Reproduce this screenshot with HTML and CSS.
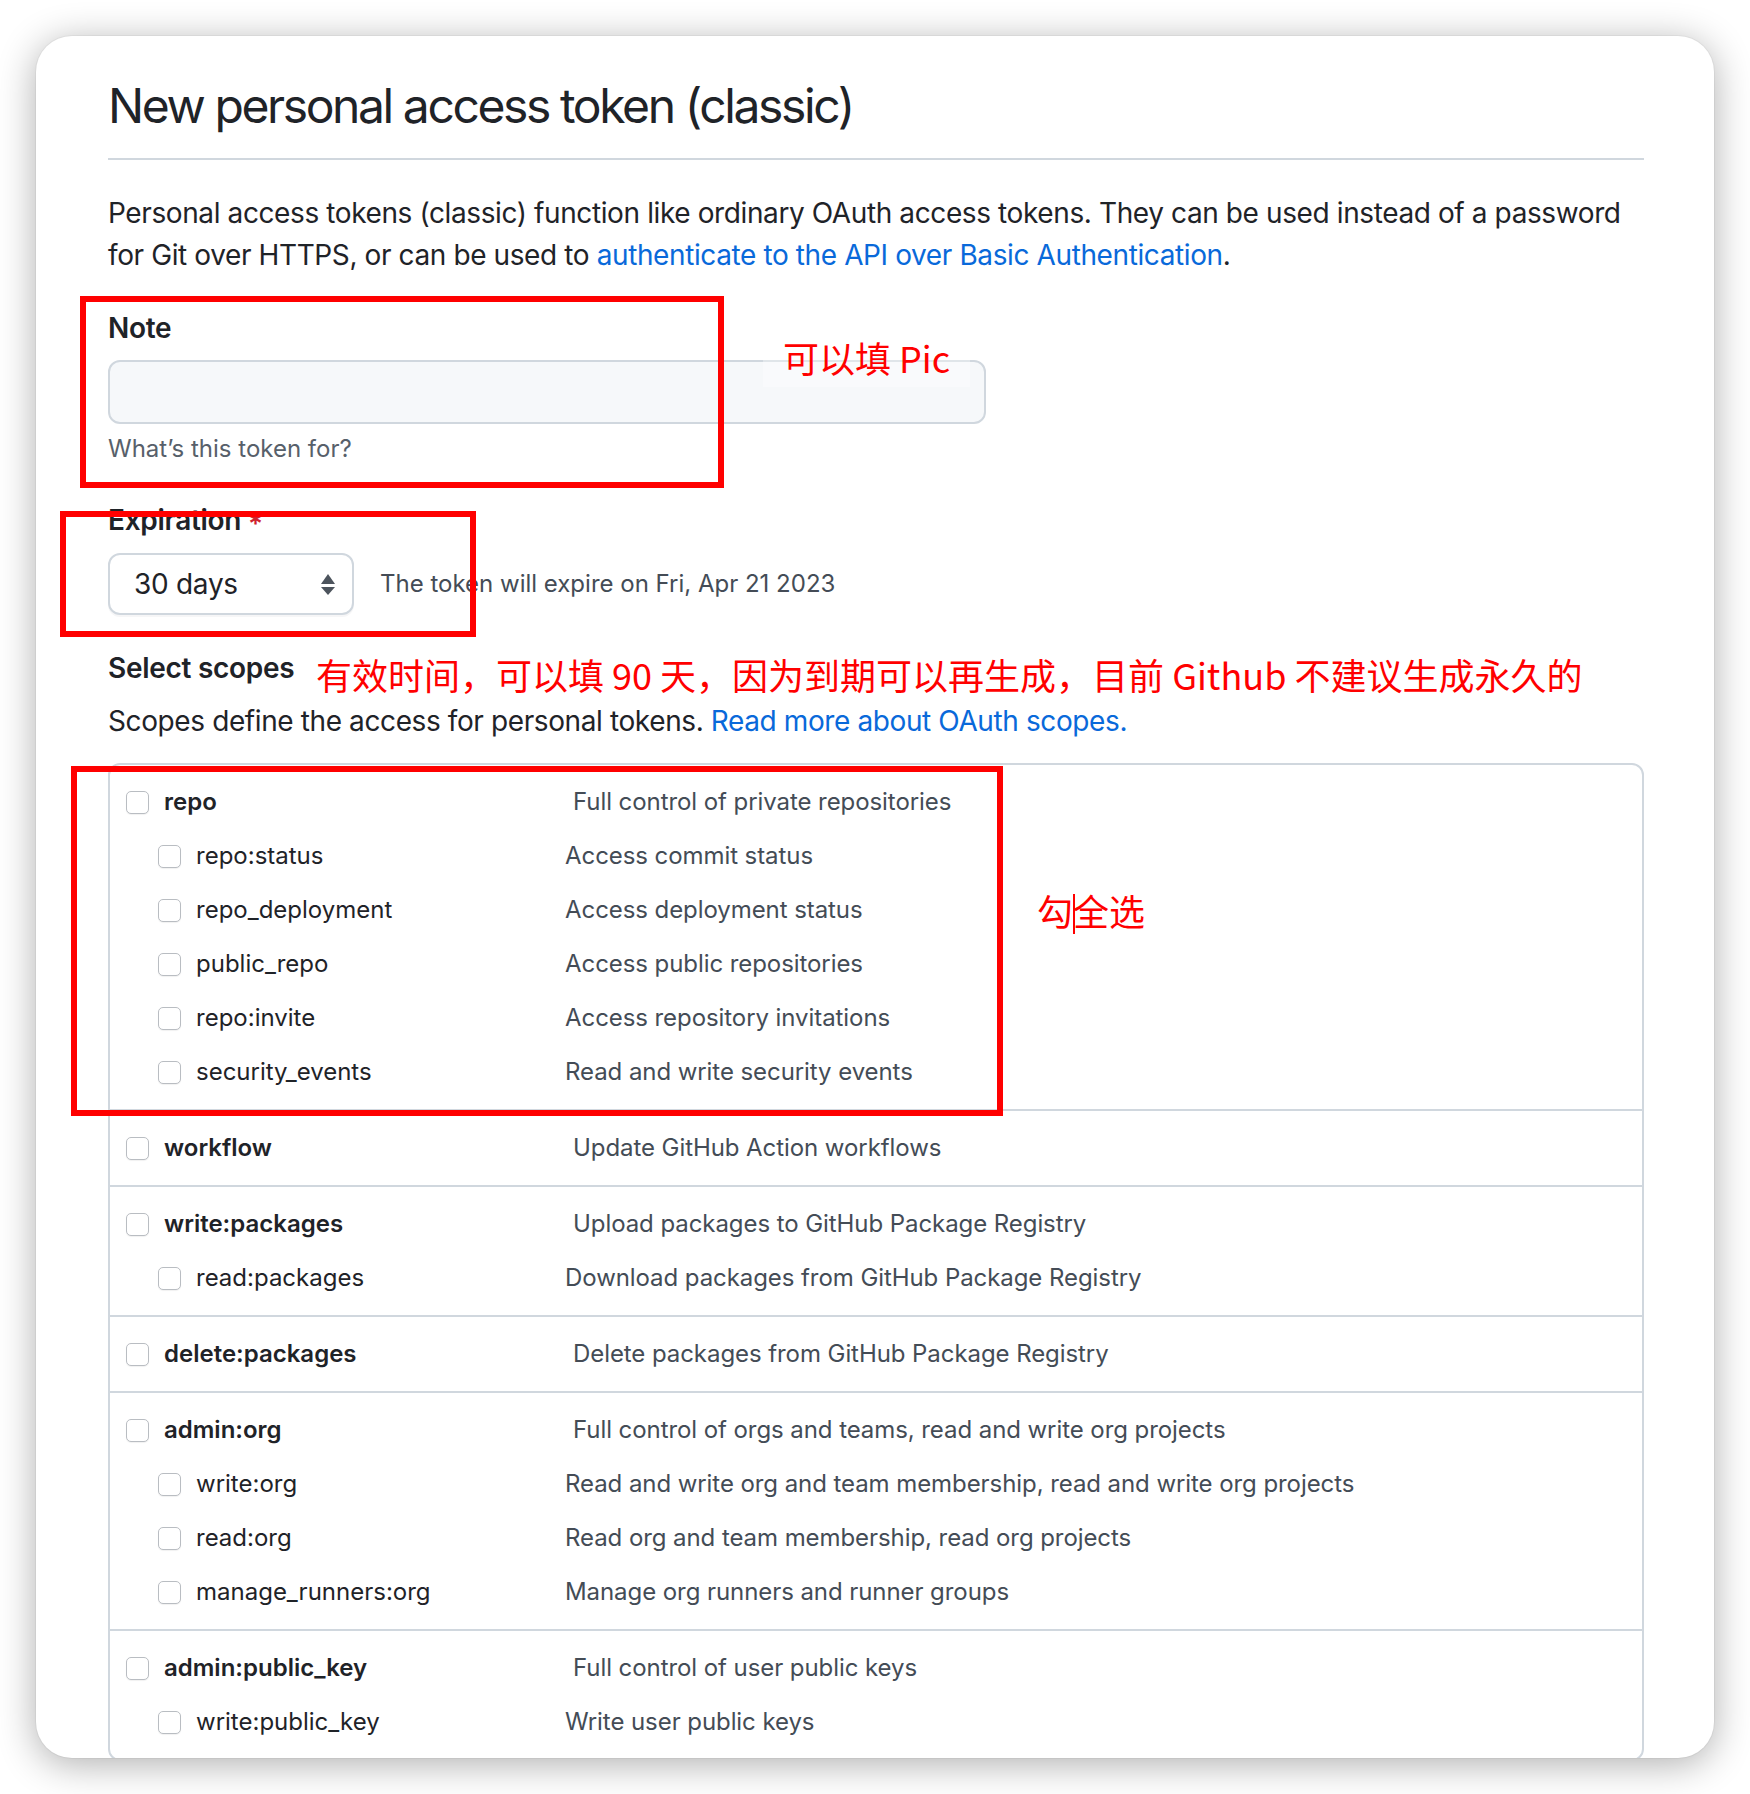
FILE: index.html
```html
<!DOCTYPE html>
<html lang="en">
<head>
<meta charset="utf-8">
<title>New personal access token (classic)</title>
<link rel="stylesheet" href="styles.css">
</head>
<body>
<div class="window">
  <main class="content">
    <h1 class="subhead">New personal access token (classic)</h1>
    <p class="intro">Personal access tokens (classic) function like ordinary OAuth access tokens. They can be used instead of a password for Git over HTTPS, or can be used to <a class="link" href="#">authenticate to the API over Basic Authentication</a>.</p>

    <div class="form-group">
      <label class="label note-label" for="note">Note</label>
      <input class="input" id="note" type="text">
      <p class="hint">What’s this token for?</p>
    </div>

    <div class="form-group">
      <label class="label exp-label">Expiration <span class="req">*</span></label>
      <div class="exp-row">
        <div class="select">
          <span>30 days</span>
          <svg class="select-arrow" width="14" height="21" viewBox="0 0 14 21"><polygon points="0,10 7,0 14,10"/><polygon points="0,13 7,21 14,13"/></svg>
        </div>
        <span class="exp-hint">The token will expire on Fri, Apr 21 2023</span>
      </div>
    </div>

    <div class="scopes-head">
      <div class="label">Select scopes</div>
      <p class="scopes-note">Scopes define the access for personal tokens. <a class="link" href="#">Read more about OAuth scopes.</a></p>
    </div>

    <div class="scopes">
      <div class="group">
        <div class="row main"><input class="check" type="checkbox"><span class="name">repo</span><span class="desc">Full control of private repositories</span></div>
        <div class="row sub"><input class="check" type="checkbox"><span class="name">repo:status</span><span class="desc">Access commit status</span></div>
        <div class="row sub"><input class="check" type="checkbox"><span class="name">repo_deployment</span><span class="desc">Access deployment status</span></div>
        <div class="row sub"><input class="check" type="checkbox"><span class="name">public_repo</span><span class="desc">Access public repositories</span></div>
        <div class="row sub"><input class="check" type="checkbox"><span class="name">repo:invite</span><span class="desc">Access repository invitations</span></div>
        <div class="row sub"><input class="check" type="checkbox"><span class="name">security_events</span><span class="desc">Read and write security events</span></div>
      </div>
      <div class="group">
        <div class="row main"><input class="check" type="checkbox"><span class="name">workflow</span><span class="desc">Update GitHub Action workflows</span></div>
      </div>
      <div class="group">
        <div class="row main"><input class="check" type="checkbox"><span class="name">write:packages</span><span class="desc">Upload packages to GitHub Package Registry</span></div>
        <div class="row sub"><input class="check" type="checkbox"><span class="name">read:packages</span><span class="desc">Download packages from GitHub Package Registry</span></div>
      </div>
      <div class="group">
        <div class="row main"><input class="check" type="checkbox"><span class="name">delete:packages</span><span class="desc">Delete packages from GitHub Package Registry</span></div>
      </div>
      <div class="group">
        <div class="row main"><input class="check" type="checkbox"><span class="name">admin:org</span><span class="desc">Full control of orgs and teams, read and write org projects</span></div>
        <div class="row sub"><input class="check" type="checkbox"><span class="name">write:org</span><span class="desc">Read and write org and team membership, read and write org projects</span></div>
        <div class="row sub"><input class="check" type="checkbox"><span class="name">read:org</span><span class="desc">Read org and team membership, read org projects</span></div>
        <div class="row sub"><input class="check" type="checkbox"><span class="name">manage_runners:org</span><span class="desc">Manage org runners and runner groups</span></div>
      </div>
      <div class="group">
        <div class="row main"><input class="check" type="checkbox"><span class="name">admin:public_key</span><span class="desc">Full control of user public keys</span></div>
        <div class="row sub"><input class="check" type="checkbox"><span class="name">write:public_key</span><span class="desc">Write user public keys</span></div>
      </div>
    </div>
  </main>

  <div class="box box-note"></div>
  <div class="box box-exp"></div>
  <div class="box box-scopes"></div>

  <div class="callout callout-pic">可以填 Pic</div>
  <div class="callout callout-time">有效时间，可以填 90 天，因为到期可以再生成，目前 Github 不建议生成永久的</div>
  <div class="callout callout-all">勾<span class="caret"></span>全选</div>
</div>
</body>
</html>
```

FILE: styles.css
```css
html, body {
  margin: 0;
  background: #ffffff;
}

body {
  font-family: Inter, "Noto Sans", "Liberation Sans", sans-serif;
  color: #1f2328;
}

.window {
  position: relative;
  margin: 36px;
  height: 1722px;
  box-sizing: border-box;
  padding: 34px 70px 0 72px;
  background: #ffffff;
  border-radius: 36px;
  box-shadow: 0 6px 38px rgba(0, 0, 0, 0.32), 0 0 0 1px rgba(0, 0, 0, 0.04);
  overflow: hidden;
}

.subhead {
  margin: 0 0 32px;
  padding-bottom: 16px;
  border-bottom: 2px solid #d0d7de;
  font-size: 48px;
  line-height: 72px;
  font-weight: 400;
  letter-spacing: -0.05em;
}

.intro {
  margin: 0 0 31px;
  font-size: 28px;
  line-height: 42px;
  letter-spacing: -0.014em;
}

.link {
  color: #0969da;
  text-decoration: none;
}

.form-group {
  margin-bottom: 32px;
}

.label {
  display: block;
  font-size: 28px;
  line-height: 42px;
  font-weight: 600;
  letter-spacing: -0.01em;
}

.note-label {
  margin-bottom: 11px;
}

.input {
  display: block;
  box-sizing: border-box;
  width: 878px;
  height: 64px;
  margin: 0;
  padding: 0 24px;
  background: #f6f8fa;
  border: 2px solid #d0d7de;
  border-radius: 12px;
}

.hint {
  margin: 7px 0 0;
  font-size: 24px;
  line-height: 36px;
  color: #57606a;
}

.exp-label {
  height: 42px;
  margin-bottom: 12px;
}

.req {
  color: #cf222e;
  line-height: 0;
  vertical-align: -4px;
}

.exp-row {
  display: flex;
  align-items: center;
  gap: 26px;
}

.select {
  box-sizing: border-box;
  width: 246px;
  height: 62px;
  display: flex;
  align-items: center;
  justify-content: space-between;
  padding: 0 17px 0 24px;
  border: 2px solid #d0d7de;
  border-radius: 12px;
  background: #ffffff;
  box-shadow: 0 2px 0 rgba(31, 35, 40, 0.04);
  font-size: 28px;
  letter-spacing: -0.01em;
}

.select-arrow {
  fill: #4d545d;
}

.exp-hint {
  font-size: 24px;
  line-height: 36px;
  color: #444c56;
}

.scopes-head {
  margin-bottom: 21px;
}

.scopes-note {
  margin: 11px 0 0;
  font-size: 28px;
  line-height: 42px;
  letter-spacing: -0.014em;
}

.scopes {
  border: 2px solid #d0d7de;
  border-radius: 12px;
}

.group {
  padding: 10px 0;
}

.group + .group {
  border-top: 2px solid #d0d7de;
}

.row {
  display: flex;
  align-items: center;
  height: 54px;
  padding-left: 16px;
  font-size: 24px;
  line-height: 36px;
}

.row.sub {
  padding-left: 48px;
}

.check {
  appearance: none;
  -webkit-appearance: none;
  flex: none;
  box-sizing: border-box;
  width: 23px;
  height: 23px;
  margin: 0 15px 0 0;
  background: #ffffff;
  border: 1.5px solid #b9bdc2;
  border-radius: 5px;
  box-shadow: 0 1px 1px rgba(0, 0, 0, 0.06);
}

.name {
  flex: none;
  width: 409px;
}

.row.main .name {
  font-weight: 600;
}

.row.sub .name {
  width: 369px;
}

.desc {
  color: #444c56;
  letter-spacing: -0.003em;
}

/* annotations drawn on top of the screenshot */
.box {
  position: absolute;
  box-sizing: border-box;
  border: 6px solid #ff0000;
}

.box-note {
  left: 44px;
  top: 260px;
  width: 644px;
  height: 192px;
}

.box-exp {
  left: 24px;
  top: 475px;
  width: 416px;
  height: 126px;
}

.box-scopes {
  left: 35px;
  top: 730px;
  width: 932px;
  height: 350px;
}

.callout {
  position: absolute;
  padding: 12px 20px;
  background: rgba(255, 255, 255, 0.35);
  color: #ff0000;
  font-family: "Noto Sans CJK SC", "Noto Sans", sans-serif;
  font-size: 36px;
  line-height: 1;
  font-weight: 400;
  white-space: nowrap;
}

.callout-pic {
  left: 727px;
  top: 291px;
}

.callout-time {
  left: 260px;
  top: 608px;
}

.callout-all {
  left: 981px;
  top: 844px;
}

.caret {
  display: inline-block;
  width: 2px;
  height: 40px;
  margin-right: -2px;
  vertical-align: -8px;
  background: #ff0000;
}
```
